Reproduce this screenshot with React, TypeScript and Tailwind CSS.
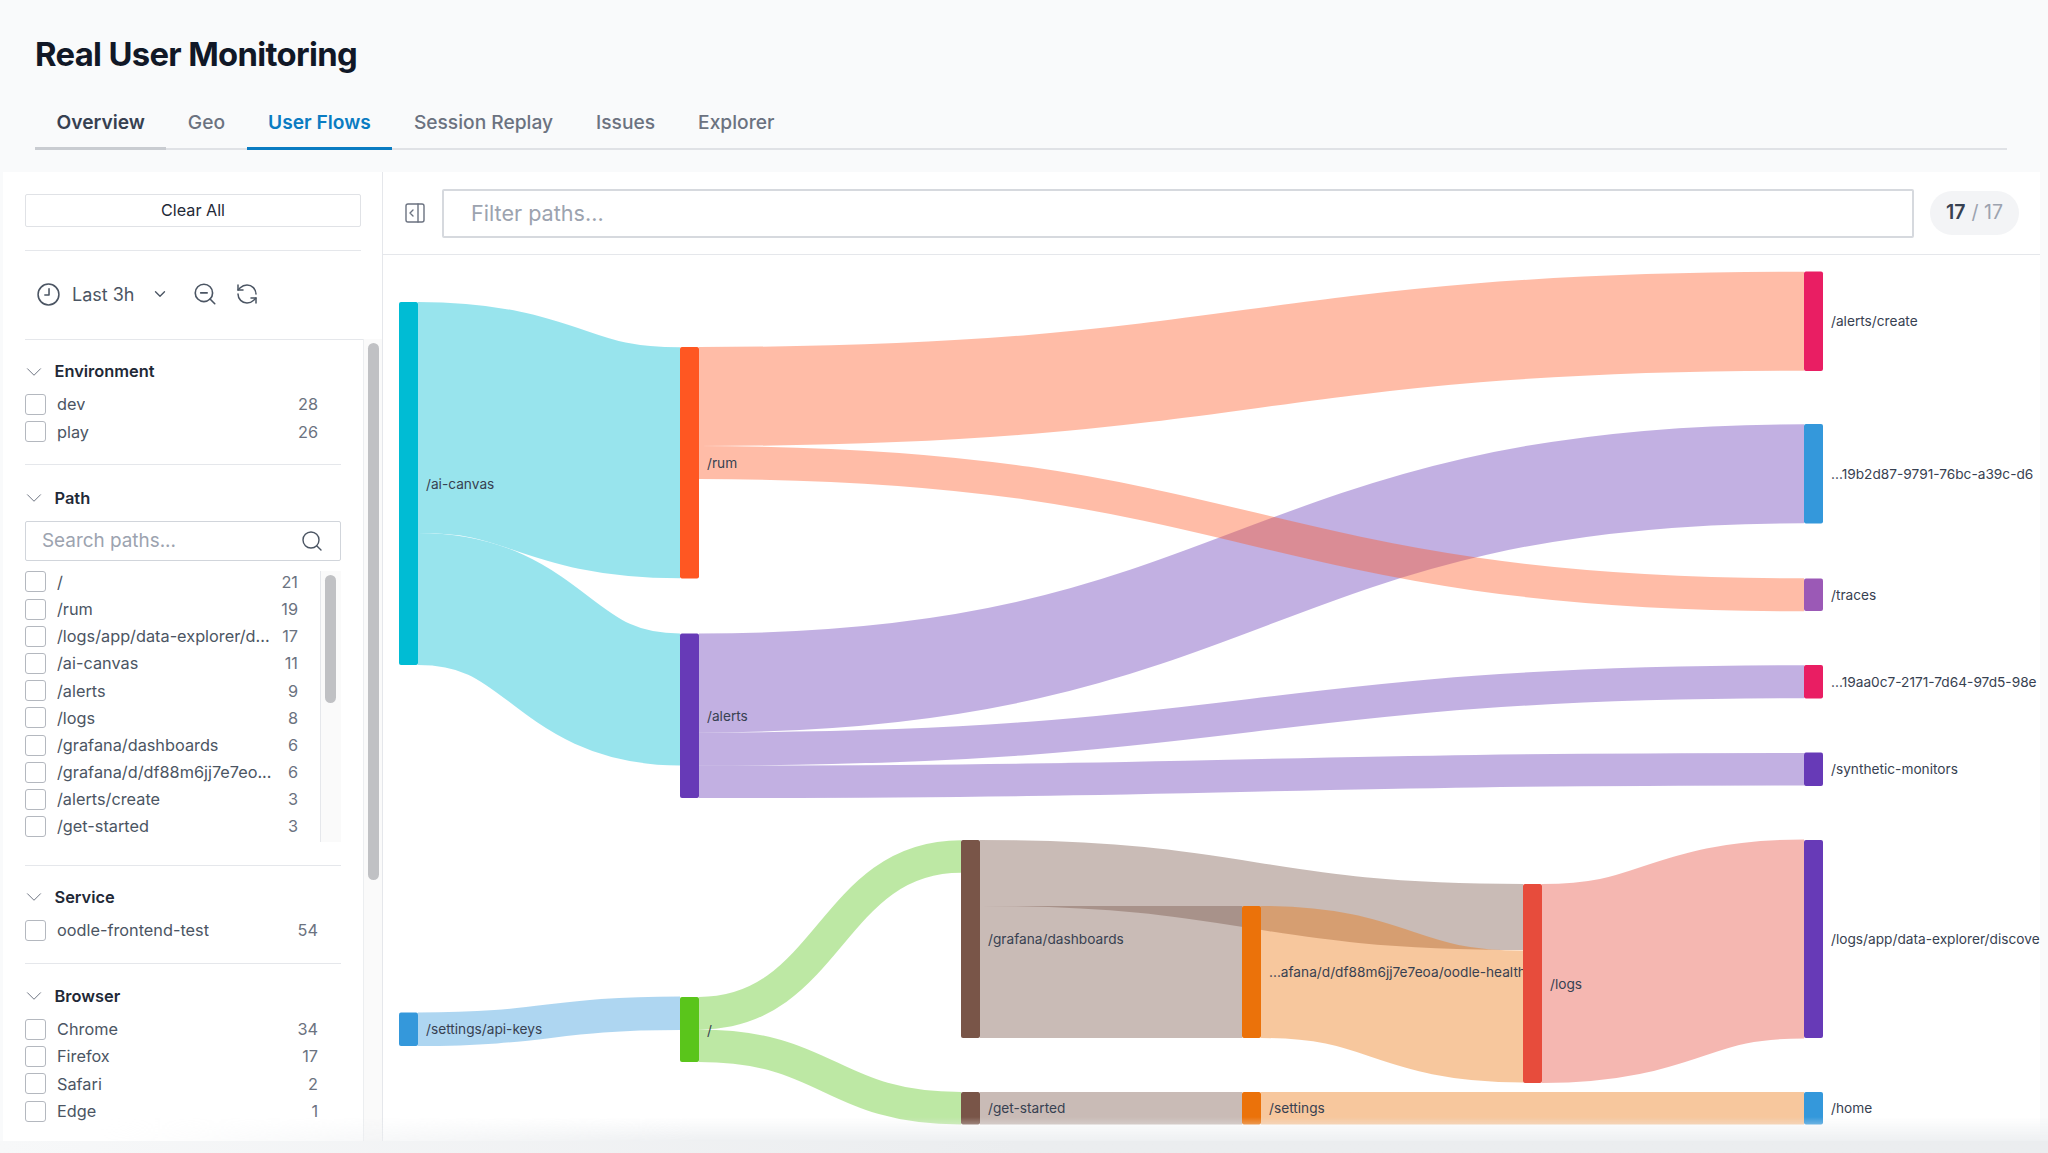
import React from "react";
import { ChevronDown, ZoomOut, RefreshCcw, Search, PanelRightOpen } from "lucide-react";

type Row = [string, number];

const Check = () => <span className="h-[21px] w-[21px] shrink-0 rounded-[3px] border-[1.5px] border-[#b4b8bf] bg-white" />;

function Rows({ rows }: { rows: Row[] }) {
  return (
    <div className="flex flex-col">
      {rows.map(([name, n]) => (
        <div key={name} className="flex h-[27.2px] items-center">
          <Check />
          <span className="ml-[11px] truncate text-[16.3px] text-[#4b5563]">{name}</span>
          <span className="ml-auto pl-1 text-[16.3px] text-[#6b7280]">{n}</span>
        </div>
      ))}
    </div>
  );
}

function Head({ title }: { title: string }) {
  return (
    <div className="mb-[3px] flex h-[33px] items-center">
      <ChevronDown size={26} strokeWidth={0.9} className="-ml-[4.5px] text-[#6b7280]" />
      <span className="ml-[8px] text-[16.4px] font-semibold text-[#1f2937]">{title}</span>
    </div>
  );
}

const X = { c0: 399, c1: 680, c2: 961, c3: 1242, c4: 1523, c5: 1804 };
const W = 19;
const OX = 383;
const OY = 255;

type L = { x0: number; x1: number; a: number; b: number; c: number; d: number; color: string };

const flow = (x0: number, x1: number, a: number, b: number, c: number, d: number, color: string): L => ({ x0, x1, a, b, c, d, color });

const aiLinks: L[] = [
  flow(X.c0, X.c1, 302, 533, 347, 578.5, "#00BCD4"),
  flow(X.c0, X.c1, 533, 665, 633.5, 765.5, "#00BCD4"),
];

const links: L[] = [
  flow(X.c1, X.c5, 633.5, 732.5, 424, 523.5, "#673AB7"),
  flow(X.c1, X.c5, 732.5, 765.5, 665, 698.5, "#673AB7"),
  flow(X.c1, X.c5, 765.5, 798, 752.5, 786, "#673AB7"),
  flow(X.c1, X.c5, 347, 446, 271.5, 371, "#FF5722"),
  flow(X.c1, X.c5, 446, 479, 578.5, 611, "#FF5722"),
  flow(X.c0, X.c1, 1012.5, 1046, 997, 1029.5, "#3498DB"),
  flow(X.c1, X.c2, 997, 1029.5, 840, 873, "#5AC51B"),
  flow(X.c1, X.c2, 1029.5, 1062, 1092, 1124.5, "#5AC51B"),
  flow(X.c2, X.c4, 840, 906, 884, 950, "#795548"),
  flow(X.c2, X.c3, 906, 1038, 906, 1038, "#795548"),
  flow(X.c3, X.c4, 906, 1038, 950, 1083, "#EB720A"),
  flow(X.c4, X.c5, 884, 1083, 840, 1038, "#E74C3C"),
  flow(X.c2, X.c3, 1092, 1124.5, 1092, 1124.5, "#795548"),
  flow(X.c3, X.c5, 1092, 1124.5, 1092, 1124.5, "#EB720A"),
];

const nodes: [number, number, number, string, string][] = [
  [X.c0, 302, 665, "#00BCD4", "/ai-canvas"],
  [X.c1, 347, 578.5, "#FF5722", "/rum"],
  [X.c1, 633.5, 798, "#673AB7", "/alerts"],
  [X.c5, 271.5, 371, "#E91E63", "/alerts/create"],
  [X.c5, 424, 523.5, "#3498DB", "...19b2d87-9791-76bc-a39c-d6"],
  [X.c5, 578.5, 611, "#9B59B6", "/traces"],
  [X.c5, 665, 698.5, "#E91E63", "...19aa0c7-2171-7d64-97d5-98e"],
  [X.c5, 752.5, 786, "#673AB7", "/synthetic-monitors"],
  [X.c0, 1012.5, 1046, "#3498DB", "/settings/api-keys"],
  [X.c1, 997, 1062, "#5AC51B", "/"],
  [X.c2, 840, 1038, "#795548", "/grafana/dashboards"],
  [X.c2, 1092, 1124.5, "#795548", "/get-started"],
  [X.c3, 906, 1038, "#EB720A", "...afana/d/df88m6jj7e7eoa/oodle-health"],
  [X.c3, 1092, 1124.5, "#EB720A", "/settings"],
  [X.c4, 884, 1083, "#E74C3C", "/logs"],
  [X.c5, 840, 1038, "#673AB7", "/logs/app/data-explorer/discove"],
  [X.c5, 1092, 1124.5, "#3498DB", "/home"],
];

function linkPath(l: L) {
  const s = l.x0 + W - OX;
  const e = l.x1 - OX;
  const m = (s + e) / 2;
  const y0 = (l.a + l.b) / 2 - OY;
  const y1 = (l.c + l.d) / 2 - OY;
  return `M${s} ${y0}C${m} ${y0} ${m} ${y1} ${e} ${y1}`;
}

function Sankey() {
  return (
    <svg width={1657} height={886} viewBox="0 0 1657 886" className="block">
      <g opacity={0.4}>
        {aiLinks.map((l, i) => (
          <path key={i} d={linkPath(l)} fill="none" stroke={l.color} strokeWidth={l.b - l.a} />
        ))}
      </g>
      {links.map((l, i) => (
        <path key={i} d={linkPath(l)} fill="none" stroke={l.color} strokeOpacity={0.4} strokeWidth={l.b - l.a} />
      ))}
      {nodes.map(([x, y0, y1, , label]) => (
        <text
          key={label}
          x={x + W + 8 - OX}
          y={(y0 + y1) / 2 - OY}
          dominantBaseline="central"
          fontSize={13.7}
          fill="#374151"
        >
          {label}
        </text>
      ))}
      {nodes.map(([x, y0, y1, color, label]) => (
        <rect key={label} x={x - OX} y={y0 - OY} width={W} height={y1 - y0} rx={2} fill={color} />
      ))}
    </svg>
  );
}

const tabs = ["Overview", "Geo", "User Flows", "Session Replay", "Issues", "Explorer"];

export default function App() {
  return (
    <div className="relative flex h-[1153px] w-[2048px] flex-col overflow-hidden bg-[#f9fafb] font-['Inter',sans-serif]">
      <h1 className="ml-[35px] mt-[34px] h-[40px] text-[32.8px] font-bold leading-[40px] tracking-[-0.02em] text-[#111827]">
        Real User Monitoring
      </h1>
      <div className="ml-[35px] mr-[41px] mt-[24px] flex h-[52px] border-b-2 border-[#e0e2e6]">
        {tabs.map((t) => (
          <div
            key={t}
            className={
              t === "Overview"
                ? "-mb-[2px] flex h-[52px] items-center border-b-[3px] border-[#c9ccd1] px-[21.5px] text-[19.2px] font-semibold text-[#374151]"
                : t === "User Flows"
                  ? "-mb-[2px] flex h-[52px] items-center border-b-[3px] border-[#0a7cc2] px-[21.5px] text-[19.2px] font-semibold text-[#0a7cc2]"
                  : "-mb-[2px] flex h-[52px] items-center border-b-[3px] border-transparent px-[21.5px] text-[19.2px] font-medium text-[#6b7280]"
            }
          >
            {t}
          </div>
        ))}
      </div>
      <div className="ml-[3px] mr-[8px] mt-[22px] flex min-h-0 flex-1 bg-white">
        <aside className="flex w-[380px] shrink-0 flex-col border-r border-[#e5e7eb]">
          <div className="mx-[22px] mt-[22px] flex h-[33px] w-[336px] items-center justify-center rounded-[2px] border border-[#e0e2e6] text-[16.2px] text-[#1f2937]">
            Clear All
          </div>
          <div className="mx-[22px] mt-[23px] w-[336px] border-t border-[#e5e7eb]" />
          <div className="ml-[33px] mt-[30px] flex h-[26px] items-center text-[#4b5563]">
            <svg width="25" height="25" viewBox="0 0 24 24" fill="none" stroke="currentColor" strokeWidth="1.5" strokeLinecap="round" strokeLinejoin="round">
              <circle cx="12" cy="12" r="10" />
              <path d="M12.5 6.5v6H8.5" />
            </svg>
            <span className="ml-[11px] text-[18px]">Last 3h</span>
            <ChevronDown size={18} strokeWidth={1.8} className="ml-[16px]" />
            <ZoomOut size={26} strokeWidth={1.5} className="ml-[23px]" />
            <RefreshCcw size={24} strokeWidth={1.5} className="ml-[17px]" />
          </div>
          <div className="ml-[22px] mt-[32px] flex min-h-0 flex-1">
            <div className="w-[338px] shrink-0 border-t border-[#e5e7eb]">
              <div className="w-[316px]">
                <div className="border-b border-[#e5e7eb] pb-[19px] pt-[15px]">
                  <Head title="Environment" />
                  <div className="pr-[23px]">
                    <Rows rows={[["dev", 28], ["play", 26]]} />
                  </div>
                </div>
                <div className="border-b border-[#e5e7eb] pb-[22.6px] pt-[16px]">
                  <Head title="Path" />
                  <div className="mt-[7px] flex h-[40px] items-center justify-between rounded-[2px] border border-[#d1d5db] pl-[16px] pr-[16px]">
                    <span className="text-[18.9px] text-[#9ca3af]">Search paths...</span>
                    <Search size={24} strokeWidth={1.4} className="text-[#4b5563]" />
                  </div>
                  <div className="mt-[7px] flex h-[274px]">
                    <div className="flex w-[295px] flex-col pr-[22px]">
                      <Rows
                        rows={[
                          ["/", 21],
                          ["/rum", 19],
                          ["/logs/app/data-explorer/d...", 17],
                          ["/ai-canvas", 11],
                          ["/alerts", 9],
                          ["/logs", 8],
                          ["/grafana/dashboards", 6],
                          ["/grafana/d/df88m6jj7e7eo...", 6],
                          ["/alerts/create", 3],
                          ["/get-started", 3],
                        ]}
                      />
                    </div>
                    <div className="mt-[3px] w-[21px] border-l border-[#e5e7eb] bg-[#fafafa] pl-[4px] pt-[4px]">
                      <div className="h-[128px] w-[11px] rounded-full bg-[#c0c1c4]" />
                    </div>
                  </div>
                </div>
                <div className="border-b border-[#e5e7eb] pb-[19px] pt-[14.7px]">
                  <Head title="Service" />
                  <div className="pr-[23px]">
                    <Rows rows={[["oodle-frontend-test", 54]]} />
                  </div>
                </div>
                <div className="pt-[16px]">
                  <Head title="Browser" />
                  <div className="pr-[23px]">
                    <Rows rows={[["Chrome", 34], ["Firefox", 17], ["Safari", 2], ["Edge", 1]]} />
                  </div>
                </div>
              </div>
            </div>
            <div className="flex-1 border-l border-[#eceef0] bg-[#fafafa] pl-[4px] pt-[4px]">
              <div className="h-[537px] w-[11px] rounded-full bg-[#c0c1c4]" />
            </div>
          </div>
        </aside>
        <main className="flex min-w-0 flex-1 flex-col">
          <div className="flex h-[83px] items-center border-b border-[#e5e7eb]">
            <PanelRightOpen size={24} strokeWidth={1.4} className="ml-[20px] text-[#6b7280]" />
            <div className="ml-[15px] flex h-[49px] w-[1472px] items-center rounded-[2px] border-2 border-[#d6d9de] pl-[27px] text-[21.6px] text-[#9ca3af]">
              Filter paths...
            </div>
            <div className="ml-[16px] flex h-[44px] w-[89px] items-center justify-center rounded-full bg-[#f3f4f6] text-[19.5px]">
              <span className="font-semibold text-[#374151]">17</span>
              <span className="ml-[6px] text-[#9ca3af]">/ 17</span>
            </div>
          </div>
          <div className="min-h-0 flex-1 overflow-hidden">
            <Sankey />
          </div>
        </main>
      </div>
      <div className="h-[12px] shrink-0 bg-gradient-to-r from-[#f7f8f9] via-[#ebedef] to-[#ebedef]" />
      <div className="pointer-events-none absolute bottom-[12px] left-0 right-0 h-[24px] bg-gradient-to-b from-transparent to-[#eef0f2] [mask-image:linear-gradient(to_right,transparent_100px,black_700px)]" />
    </div>
  );
}
